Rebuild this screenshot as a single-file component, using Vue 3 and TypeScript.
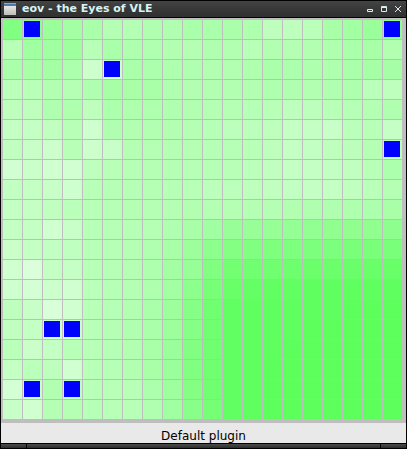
<script setup lang="ts">
// Red/blue channel of every cell, two hex digits each; green is always 255.
const rows: string[] = [
  '80889aa4aab4b4b0b0aaaaaaaebebebaa8a29a8c',
  'b8a0a09eb8aaaeb0b2b4b0b2b8b2b4b2aeaaa8b2',
  'aaa8a4acccccaaacaeb0b2b2aeaaacaeaeaaa6a6',
  'bab8b2b4b0a6a8a8b0b2b2b2b2aeb0b2b0aebabe',
  'bebeb0aebeacaeaeb0b2b4b4b6b8bebcb8b6b4b0',
  'c4c4c0b8ceb0b2b2b2b4b6bcbcbec4c4c8bab8c6',
  'c0c8ccb8ccc8b4b4b4b4b6b6b8bec4c2bebcb4b8',
  'd2cad0d2beb8b6b4b4b6b6b8bac0c4c4c2c0b8ac',
  'c2c4c8ceb8b6b6b4b6b8bcbcbec0c2c4c4c0bab4',
  'c4c4c0bab8b6b4b4b4b2b4b4b4b4b2b0b0aeaca8',
  'c4c4d0c8b8b6b6b4b0a8a098989694929090908e',
  'cac4c2bfb8b6b4b0a89c8c84807e7e7c7c7a7a7a',
  'd0dac4c6b8b6b4aea498807270706e6c6c6a6868',
  'ced4ccd0bab6b4aea28c78686462626060606060',
  'bec8d8d0b8b6b2aa9c86706260605e5e5e5c5c5c',
  'c0c4cccab8b4b0aa9c867062605e5e5c5c5c5c5c',
  'bacac4b8b8b6b2a89a8270625e5e5c5c5c5c5c5c',
  'c4babed0b8b6b2a89a8070625e5c5c5c5c5c5c5c',
  'd4c8b2bcb8b8b8ac9e8470625e5c5c5c5c5c5c5c',
  'c8d0b4b4b6b8b8b0a0887462605c5c5c5c5c5c5c',
]

const agents = new Set<string>(['0-1', '0-19', '2-5', '6-19', '15-2', '15-3', '18-1', '18-3'])

const cells = rows.flatMap((row, y) =>
  (row.match(/../g) ?? []).map((v, x) => ({
    id: `${y}-${x}`,
    color: `#${v}ff${v}`,
    agent: agents.has(`${y}-${x}`),
  })),
)
</script>

<template>
  <div class="window">
    <header class="titlebar">
      <svg class="app-icon" width="14" height="14" viewBox="0 0 14 14" aria-hidden="true">
        <defs>
          <linearGradient id="paper" x1="0" y1="0" x2="0" y2="1">
            <stop offset="0" stop-color="#f4f4f2" />
            <stop offset="1" stop-color="#bdbdb9" />
          </linearGradient>
        </defs>
        <rect x="1" y="1" width="12" height="12" fill="url(#paper)" />
        <rect x="1" y="1" width="12" height="1" fill="#88a8d0" />
        <rect x="1" y="2" width="12" height="2" fill="#4c78b4" />
      </svg>
      <h1 class="title">eov - the Eyes of VLE</h1>
      <div class="controls">
        <button type="button" aria-label="Minimize">
          <svg width="6" height="6" viewBox="0 0 6 6"><path d="M.5 3.5h5v2h-5z" /></svg>
        </button>
        <button type="button" aria-label="Maximize">
          <svg width="6" height="6" viewBox="0 0 6 6"><path d="M.5 .5h5v5h-5zM0 1.5h6" /></svg>
        </button>
        <button type="button" aria-label="Close">
          <svg width="6" height="6" viewBox="0 0 6 6"><path d="M0 0l6 6M6 0l-6 6" /></svg>
        </button>
      </div>
    </header>
    <main class="view">
      <div class="grid">
        <div v-for="cell in cells" :key="cell.id" class="cell" :style="{ backgroundColor: cell.color }">
          <div v-if="cell.agent" class="agent"></div>
        </div>
      </div>
    </main>
    <footer class="status">Default plugin</footer>
    <div class="resize-bar"><span class="grip"></span><span class="rail"></span><span class="grip"></span></div>
  </div>
</template>

<style>
body {
  margin: 0;
  background: #000;
}
</style>

<style scoped>
.window {
  box-sizing: border-box;
  padding: 1px;
  background: #000;
  font-family: "DejaVu Sans", sans-serif;
}
.titlebar {
  display: flex;
  align-items: center;
  height: 16px;
  padding: 0 1px 0 2px;
  margin-bottom: 1px;
  background: linear-gradient(#444, #383838 50%, #303030);
}
.app-icon {
  flex: none;
}
.title {
  flex: 1;
  margin: 0 0 0 5px;
  font-size: 11px;
  line-height: 16px;
  font-weight: bold;
  color: #d8f4f4;
  white-space: nowrap;
}
.controls {
  display: flex;
}
.controls button {
  display: flex;
  align-items: center;
  justify-content: center;
  width: 14px;
  height: 16px;
  padding: 0;
  border: 0;
  background: none;
}
.controls path {
  fill: none;
  stroke: #d8f0f0;
}
.view {
  padding: 2px 4px 4px 2px;
  background: #bebebe;
}
.grid {
  display: grid;
  grid-template-columns: repeat(20, 1fr);
  gap: 1px;
}
.cell {
  box-sizing: border-box;
  aspect-ratio: 1;
  padding: 1px 2px 2px 1px;
}
.agent {
  height: 100%;
  background: #00f;
}
.status {
  height: 20px;
  padding-top: 5px;
  box-sizing: border-box;
  background: #e9e9e9;
  color: #000;
  font-size: 12px;
  line-height: 16px;
  text-align: center;
}
.resize-bar {
  display: flex;
  gap: 1px;
  margin-top: 1px;
}
.resize-bar span {
  height: 4px;
  background: linear-gradient(#4c4c4c, #2c2c2c);
}
.grip {
  width: 25px;
}
.rail {
  flex: 1;
}
</style>
